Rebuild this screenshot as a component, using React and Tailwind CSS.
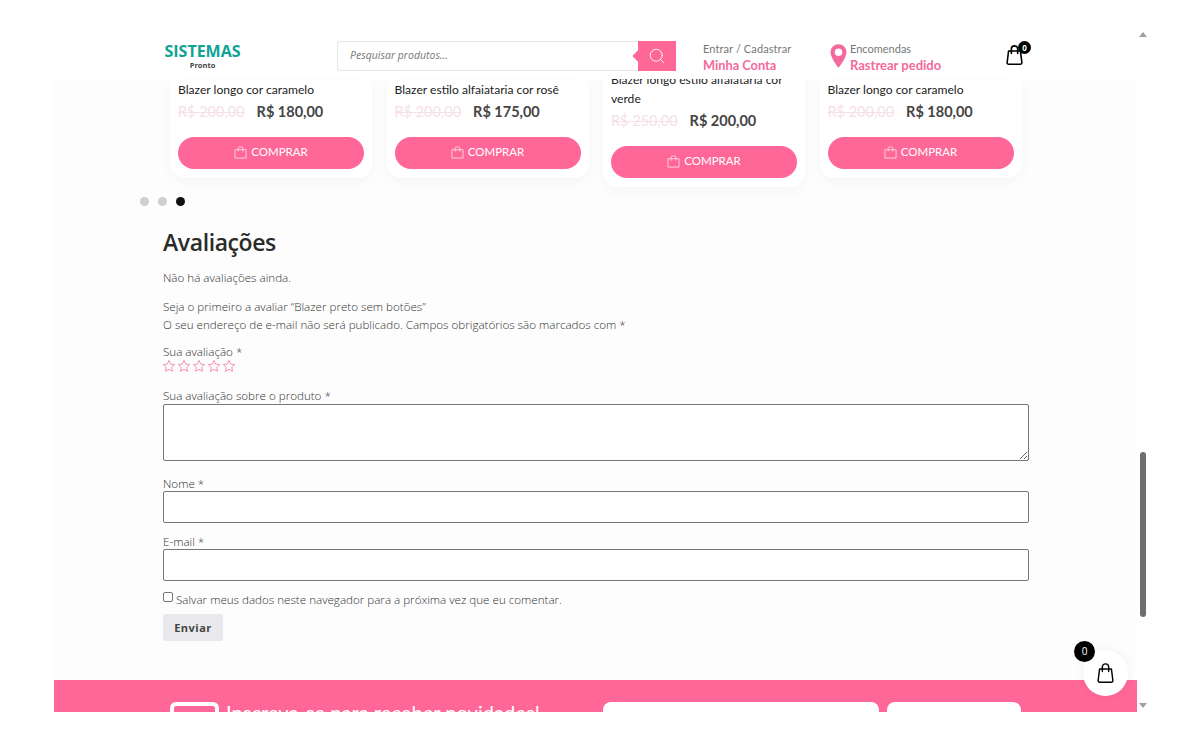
import { Search } from "lucide-react";

const jost = "font-['Lato','Liberation_Sans',sans-serif]";
const body = "font-['Open_Sans','Liberation_Sans',sans-serif]";

const products = [
  { title: "Blazer longo cor caramelo", oldPrice: "R$ 200,00", price: "R$ 180,00" },
  { title: "Blazer estilo alfaiataria cor rosê", oldPrice: "R$ 200,00", price: "R$ 175,00" },
  { title: "Blazer longo estilo alfaiataria cor verde", oldPrice: "R$ 250,00", price: "R$ 200,00", tall: true },
  { title: "Blazer longo cor caramelo", oldPrice: "R$ 200,00", price: "R$ 180,00" },
];

const BagIcon = ({ className, strokeWidth = 1.8 }) => (
  <svg viewBox="0 0 24 26" fill="none" stroke="currentColor" strokeWidth={strokeWidth} strokeLinejoin="round" strokeLinecap="round" className={className}>
    <path d="M4.500 8h15l1.800 14.500a2 2 0 0 1-2 2.200H4.700a2 2 0 0 1-2-2.200L4.500 8z" />
    <path d="M8 11V5.500a4 4 0 0 1 8 0V11" />
  </svg>
);

const SmallBag = () => (
  <svg viewBox="0 0 14 14" fill="none" stroke="currentColor" strokeWidth="0.9" className="w-[13px] h-[13px] opacity-80">
    <path d="M1 4h12v9H1z" />
    <path d="M4.500 6V2.500a1.500 1.500 0 0 1 1.500-1.500h2a1.500 1.500 0 0 1 1.500 1.500V6" />
  </svg>
);

const Star = () => (
  <svg viewBox="0 0 24 24" fill="none" stroke="#f0709f" strokeWidth="1.300" className="w-[14px] h-[14px] mr-px">
    <path d="M12 2.500l2.900 6.300 6.800.8-5 4.700 1.300 6.800-6-3.400-6 3.400 1.300-6.800-5-4.700 6.800-.8z" />
  </svg>
);

const ProductCard = ({ product }) => (
  <div className={`w-[202px] ${product.tall ? "h-[117px] -mt-[10px]" : "h-[98px]"} bg-white rounded-b-[14px] px-2 shadow-[0_4px_14px_rgba(0,0,0,0.03)] flex flex-col ${jost}`}>
    <div className="text-[12.100px] leading-[19px] text-[#222]">{product.title}</div>
    <div className="flex items-center mt-px h-[24px]">
      <span className="text-[14.500px] text-[#f6dfe7] line-through">{product.oldPrice}</span>
      <span className="text-[14.500px] font-bold text-[#444] ml-3">{product.price}</span>
    </div>
    <button className="mt-[13px] h-[32px] shrink-0 pb-[2px] rounded-full bg-[#ff6798] text-white text-[11.500px] flex items-center justify-center gap-1">
      <SmallBag />
      COMPRAR
    </button>
  </div>
);

const Field = ({ label, children, className = "" }) => (
  <div className={className}>
    <label className="block text-[11.625px] leading-[14px] text-[#333] font-light">{label}</label>
    {children}
  </div>
);

export default function App() {
  return (
    <div className={`w-[1200px] h-[746px] bg-white flex overflow-hidden relative ${body}`}>
      <div className="w-[54px] shrink-0" />

      <div className="w-[1083px] h-[712px] shrink-0 flex flex-col bg-[#fdfdfd] overflow-hidden">
        {/* Header */}
        <header className="h-[79px] shrink-0 bg-white relative z-10 flex items-start pl-[110px]">
          <div className="w-[77px] pt-[42px] text-center leading-none mr-[96px]">
            <div className="text-[16px] font-bold text-[#0fa396] leading-[18px]">SISTEMAS</div>
            <div className="text-[7.500px] font-bold text-[#444] leading-[8px] mt-px">Pronto</div>
          </div>

          <div className="mt-[41px] w-[339px] h-[30px] flex">
            <div className="flex-1 border border-[#e6e6e6] border-r-0 rounded-l-[3px] flex items-center pl-3 text-[10.500px] italic text-[#777]">
              Pesquisar produtos...
            </div>
            <div className="w-[38px] bg-[#ff6798] flex items-center justify-center relative">
              <span className="absolute left-[-4px] top-[11px] w-2 h-2 rotate-45 bg-[#ff6798]" />
              <Search size={18} strokeWidth={1.200} className="text-white" />
            </div>
          </div>

          <div className={`ml-[27px] w-[127px] pt-[42px] ${jost}`}>
            <div className="text-[11px] leading-[14px] tracking-[0.1px] text-[#777]">Entrar / Cadastrar</div>
            <div className="text-[12.800px] leading-[19px] font-bold text-[#f5699c]">Minha Conta</div>
          </div>

          <div className={`flex pt-[42px] w-[175px] ${jost}`}>
            <svg viewBox="0 0 18 26" className="w-[17px] h-[25px] mt-[2px] mr-[3px]">
              <path fillRule="evenodd" fill="#f5699c" d="M9 0a8.500 8.500 0 0 0-8.500 8.500C.5 14.500 9 25 9 25s8.500-10.500 8.500-16.500A8.500 8.500 0 0 0 9 0zm0 12.500a4 4 0 1 1 0-8 4 4 0 0 1 0 8z" />
            </svg>
            <div>
              <div className="text-[11px] leading-[14px] text-[#777]">Encomendas</div>
              <div className="text-[13px] leading-[19px] font-bold text-[#f5699c]">Rastrear pedido</div>
            </div>
          </div>

          <div className="relative mt-[44px] w-[19px] h-[22px] text-black">
            <BagIcon className="w-[19px] h-[22px]" strokeWidth={2} />
            <span className="absolute -top-[3px] -right-[7px] w-[13px] h-[13px] rounded-full bg-black text-white text-[8px] font-bold flex items-center justify-center">0</span>
          </div>
        </header>

        {/* Related products, scrolled under the header */}
        <div className="flex-1 min-h-0 mt-px">
          <div className="flex items-start gap-[14.500px] pl-[116px]">
            {products.map((p, i) => (
              <ProductCard key={i} product={p} />
            ))}
          </div>

          <div className="flex gap-[9px] pl-[86px] mt-[10px] h-[9px]">
            <span className="w-[9px] h-[9px] rounded-full bg-[#cfcfcf]" />
            <span className="w-[9px] h-[9px] rounded-full bg-[#cfcfcf]" />
            <span className="w-[9px] h-[9px] rounded-full bg-[#111]" />
          </div>

          {/* Reviews */}
          <section className="pl-[109px] w-[975px] text-[#333]">
            <h2 className="text-[23px] tracking-[-0.4px] leading-[30px] mt-[21px] font-semibold text-[#2b2b2b]">Avaliações</h2>
            <p className="text-[11.625px] font-light leading-[18px] mt-[12px]">Não há avaliações ainda.</p>
            <p className="text-[11.625px] font-light leading-[18px] mt-[11px]">Seja o primeiro a avaliar “Blazer preto sem botões”</p>
            <p className="text-[11.625px] font-light leading-[18px]">O seu endereço de e-mail não será publicado. Campos obrigatórios são marcados com *</p>

            <Field label="Sua avaliação *" className="mt-[11px]">
              <div className="flex ml-[-1px]">
                <Star />
                <Star />
                <Star />
                <Star />
                <Star />
              </div>
            </Field>

            <Field label="Sua avaliação sobre o produto *" className="mt-[16px]">
              <textarea className="block w-full h-[57px] mt-px border border-[#767676] rounded-[2px] bg-white resize-y" />
            </Field>
            <Field label="Nome *" className="mt-[16px]">
              <input className="block w-full h-[32px] border border-[#767676] rounded-[2px] bg-white" />
            </Field>
            <Field label="E-mail *" className="mt-[12px]">
              <input className="block w-full h-[32px] border border-[#767676] rounded-[2px] bg-white" />
            </Field>

            <label className="flex items-center mt-[10px] text-[11.625px] font-light leading-[18px]">
              <input type="checkbox" className="appearance-none w-[10px] h-[10px] border border-[#767676] rounded-[2px] bg-white mr-[3px] -mt-[6px]" />
              Salvar meus dados neste navegador para a próxima vez que eu comentar.
            </label>

            <button className="block mt-[5px] w-[60px] h-[27px] pt-px bg-[#e9e9ed] rounded-[2px] text-[11px] font-bold tracking-[0.5px] text-[#444]">
              Enviar
            </button>
          </section>
        </div>

        {/* Newsletter band, cut by the window */}
        <div className={`h-[32px] shrink-0 bg-[#ff6798] flex items-start overflow-hidden pl-[116px] pt-[22px] ${jost}`}>
          <div className="w-[49px] h-[30px] border-[4px] border-white rounded-[6px] mr-[7px] shrink-0" />
          <div className="w-[377px] shrink-0 text-[20.100px] leading-[19px] mt-px text-white">Inscreva-se para receber novidades!</div>
          <div className="w-[276px] h-[30px] bg-white rounded-[8px] shrink-0" />
          <div className="w-[134px] h-[30px] bg-white rounded-[8px] ml-[8px] shrink-0" />
        </div>
      </div>

      {/* Scrollbar */}
      <div className="w-[10px] h-[712px] shrink-0 relative">
        <span className="absolute top-[32px] left-[2px] border-x-[4px] border-x-transparent border-b-[5px] border-b-[#a0a0a0]" />
        <span className="absolute top-[452px] left-[3px] w-[6px] h-[165px] rounded-full bg-[#6e6e6e]" />
        <span className="absolute top-[703px] left-[2px] border-x-[4px] border-x-transparent border-t-[5px] border-t-[#a0a0a0]" />
      </div>

      {/* Floating cart */}
      <div className="absolute left-[1083px] top-[650px] w-[45px] h-[46px] rounded-full bg-white shadow-[0_0_10px_rgba(0,0,0,0.06)] flex items-center justify-center z-20">
        <BagIcon className="w-[19px] h-[24px] text-black" />
      </div>
      <span className="absolute left-[1074px] top-[641px] w-[21px] h-[21px] rounded-full bg-black text-white text-[10px] flex items-center justify-center z-30">0</span>
    </div>
  );
}
